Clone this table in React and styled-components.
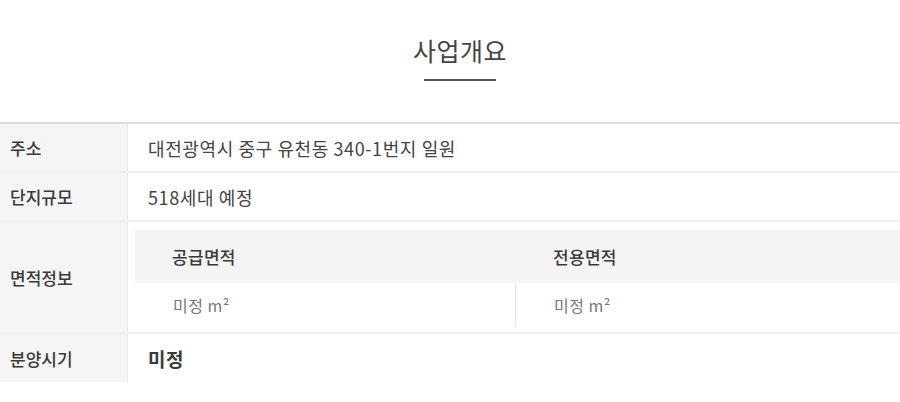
import React from "react";
import styled, { createGlobalStyle } from "styled-components";

const GlobalStyle = createGlobalStyle`
  body {
    margin: 0;
    background: #fff;
    font-family: "Noto Sans CJK KR", "Noto Sans", sans-serif;
    color: #444;
  }
`;

const App = () => {
  return (
    <>
      <GlobalStyle />
      <Section>
        <TitleWrap>
          <Title>사업개요</Title>
        </TitleWrap>
        <Table>
          <Row>
            <Label>주소</Label>
            <Value>대전광역시 중구 유천동 340-1번지 일원</Value>
          </Row>
          <Row>
            <Label>단지규모</Label>
            <Value>518세대 예정</Value>
          </Row>
          <Row>
            <Label>면적정보</Label>
            <AreaCell>
              <AreaTable>
                <AreaHead>공급면적</AreaHead>
                <AreaHead>전용면적</AreaHead>
                <AreaValue>미정 m²</AreaValue>
                <AreaValue $last>미정 m²</AreaValue>
              </AreaTable>
            </AreaCell>
          </Row>
          <Row $last>
            <Label $tall>분양시기</Label>
            <Value $strong>미정</Value>
          </Row>
        </Table>
      </Section>
    </>
  );
};

export default App;

const Section = styled.div`
  width: 900px;
  padding-top: 32px;
`;

const TitleWrap = styled.div`
  display: flex;
  justify-content: center;
  padding-left: 20px;
`;

const Title = styled.h2`
  margin: 0;
  width: 72px;
  padding: 0 0 11px;
  font-size: 25px;
  font-weight: 400;
  line-height: 36px;
  letter-spacing: 0.5px;
  color: #444;
  white-space: nowrap;
  display: flex;
  justify-content: center;
  border-bottom: 2px solid #555;
`;

const Table = styled.div`
  margin-top: 41px;
  border-top: 2px solid #dcdcdc;
`;

const Row = styled.div`
  display: grid;
  grid-template-columns: 128px 1fr;
  border-bottom: ${(p) => (p.$last ? "none" : "2px solid #f0f0f0")};
`;

const Label = styled.div`
  display: flex;
  align-items: center;
  min-height: ${(p) => (p.$tall ? "48px" : "47px")};
  padding-left: 10px;
  background: #f5f5f5;
  border-right: 1px solid #ebebeb;
  font-size: 17px;
  font-weight: 500;
  color: #3a3a3a;
`;

const Value = styled.div`
  display: flex;
  align-items: center;
  padding-left: 20px;
  font-size: ${(p) => (p.$strong ? "19px" : "18px")};
  font-weight: ${(p) => (p.$strong ? 700 : 400)};
  letter-spacing: ${(p) => (p.$strong ? "0.5px" : "0.6px")};
  color: ${(p) => (p.$strong ? "#3a3a3a" : "#444")};
`;

const AreaCell = styled.div`
  padding: 8px 0 5px 7px;
`;

const AreaTable = styled.div`
  display: grid;
  grid-template-columns: 381px 1fr;
  grid-template-rows: 53px 44px;
`;

const AreaHead = styled.div`
  display: flex;
  align-items: center;
  padding-left: 37px;
  background: #f4f4f4;
  font-size: 17px;
  font-weight: 500;
  letter-spacing: 0.3px;
  color: #3a3a3a;
`;

const AreaValue = styled.div`
  display: flex;
  align-items: center;
  padding-left: 38px;
  font-size: 16px;
  letter-spacing: 0.5px;
  color: #777;
  border-right: ${(p) => (p.$last ? "none" : "1px solid #e2e2e2")};
`;
